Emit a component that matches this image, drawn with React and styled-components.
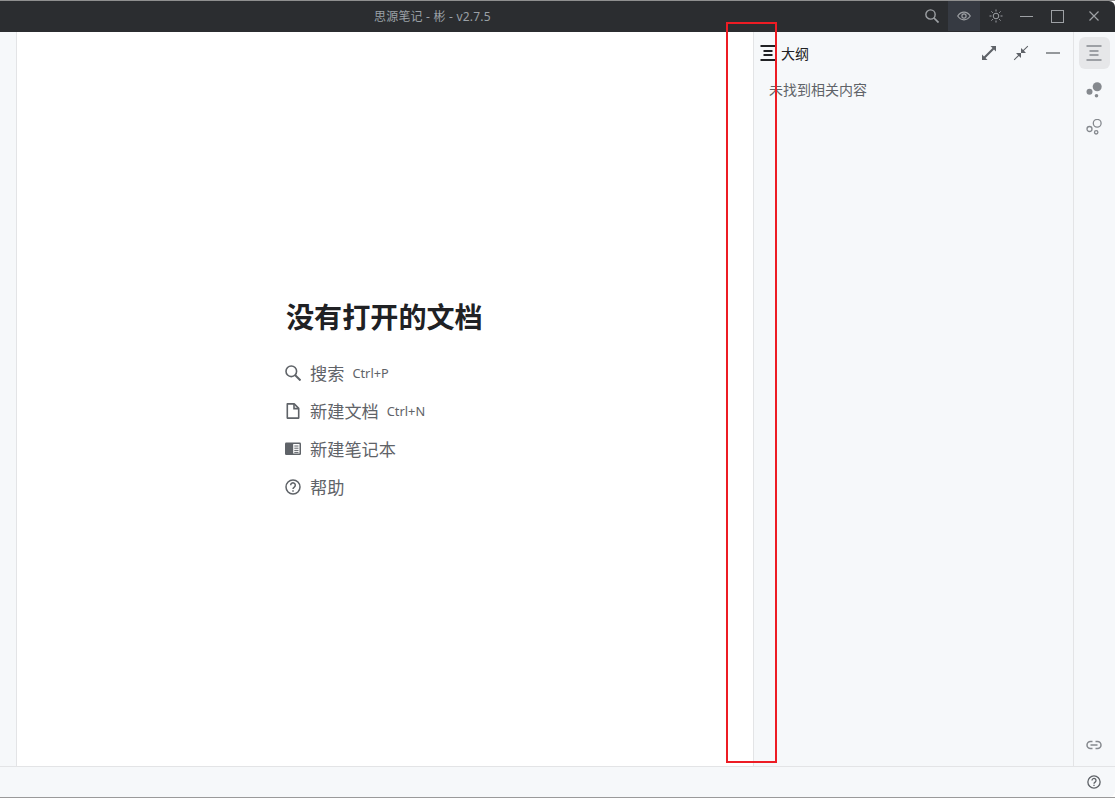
import React from "react";
import styled, { createGlobalStyle } from "styled-components";

const Global = createGlobalStyle`
  html, body { margin: 0; padding: 0; background: #9a9a9a; }
  body { font-family: "Liberation Sans", "Noto Sans CJK SC", sans-serif; }
  svg { display: block; }
`;
const Win = styled.div`
  position: relative; width: 1115px; height: 798px; overflow: hidden;
  display: flex; flex-direction: column; background: #fff;
  border-top: 1px solid #8f8f8f; border-bottom: 1px solid #9a9a9a; box-sizing: border-box;
`;
const TitleBar = styled.header`
  height: 31px; flex: none; background: #2b2d30; display: flex; align-items: flex-start; position: relative;
  border-top-right-radius: 6px;
`;
const Title = styled.div`
  position: absolute; left: 374px; top: 8px; font-size: 12px; line-height: 16px; color: #9aa0a6; letter-spacing: 0.2px;
  font-family: "Noto Sans", "Noto Sans CJK SC", sans-serif; white-space: nowrap;
`;
const WinButtons = styled.div`
  margin-left: auto; display: flex; height: 30px;
`;
const WinBtn = styled.div`
  width: ${p => p.$w}px; height: 100%; display: flex; align-items: center; justify-content: center;
  background: ${p => p.$active ? "#363a42" : "transparent"}; color: #9ea1a5;
`;
const Body = styled.div`
  flex: 1; display: flex; min-height: 0;
`;
const LeftDock = styled.aside`
  width: 17px; flex: none; background: #f6f8fa; border-right: 1px solid #e3e4e6; box-sizing: border-box;
`;
const Editor = styled.main`
  flex: 1; display: flex; flex-direction: column; padding: 266px 0 0 268px; background: #fff; min-width: 0;
`;
const Heading = styled.h1`
  margin: 0 0 20px 1px; font-size: 28.1px; line-height: 36px; font-weight: 700; color: #202124;
  font-family: "Noto Sans CJK SC", sans-serif;
`;
const Action = styled.div`
  display: flex; align-items: center; height: 38px; color: #5f6368;
`;
const ActionIcon = styled.span`
  width: 16px; height: 16px; margin-right: 9px; display: flex; color: #5f6368;
`;
const ActionText = styled.span`
  font-size: 17.2px; font-family: "Noto Sans CJK SC", sans-serif; color: #5f6368; line-height: 22px;
`;
const Hot = styled.span`
  margin-left: 8px; font-size: 12.8px; font-family: "Noto Sans", sans-serif; color: #5f6368;
`;
const Outline = styled.section`
  width: 320px; flex: none; background: #f6f8fa; border-left: 1px solid #e3e4e6; box-sizing: border-box;
  display: flex; flex-direction: column;
`;
const OutlineHead = styled.div`
  height: 42px; padding: 0 12px 0 6px; display: flex; align-items: center; flex: none; color: #202124;
`;
const OutlineTitle = styled.span`
  margin-left: 5px; font-size: 14px; color: #202124; font-family: "Noto Sans CJK SC", sans-serif; flex: 1;
`;
const HeadBtn = styled.div`
  width: 16px; height: 16px; margin-left: 16px; color: #5f6368; display: flex;
`;
const Empty = styled.div`
  padding: 5px 0 0 15px; font-size: 14px; line-height: 20px; color: #5f6368; font-family: "Noto Sans CJK SC", sans-serif;
`;
const RightDock = styled.nav`
  width: 42px; flex: none; background: #f6f8fa; border-left: 1px solid #e3e4e6; box-sizing: border-box;
  display: flex; flex-direction: column; align-items: center; padding: 5px 1px 5px 0;
`;
const DockBtn = styled.div`
  width: 31px; height: 32px; margin-bottom: ${p => p.$mb ?? 5}px; border-radius: 6px; background: ${p => p.$active ? "#e6e7e9" : "transparent"};
  display: flex; align-items: center; justify-content: center; color: #85898e;
`;
const Spacer = styled.div`flex: 1;`;
const Status = styled.footer`
  height: 31px; flex: none; background: #f6f8fa; border-top: 1px solid #e3e4e6; box-sizing: border-box;
  display: flex; align-items: center; justify-content: flex-end; padding-right: 14px; color: #5f6368;
  border-bottom-right-radius: 6px;
`;
const Annotation = styled.div`
  position: absolute; left: 726px; top: 21px; width: 51px; height: 741px; border: 2px solid #ed1c24; box-sizing: border-box; pointer-events: none;
`;

const Ic = ({ size = 16, children, sw = 1.5, fill = "none" }) => (
  <svg width={size} height={size} viewBox="0 0 16 16" fill={fill} stroke="currentColor" strokeWidth={sw}>{children}</svg>
);
const Search = ({ size = 16 }) => (
  <Ic size={size} sw={1.6}><circle cx="6.3" cy="6.3" r="5.3" /><path d="M10 10l5.500 5.500" strokeWidth="2" /></Ic>
);
const OutlineIcon = ({ sw = 1.4 }) => (
  <Ic sw={sw}><path d="M0.500 1h15M3.500 6h9M3.500 10h9M0.500 15h15" /></Ic>
);
const HelpPaths = () => (
  <>
    <circle cx="8" cy="8" r="7" />
    <path d="M5.700 6.200a2.300 2.300 0 1 1 3.600 1.900c-.9.600-1.300 1-1.300 2" />
    <path d="M8 11.200v1.500" />
  </>
);

export default function App() {
  return (
    <>
      <Global />
      <Win>
        <TitleBar>
          <Title>思源笔记 - 彬 - v2.7.5</Title>
          <WinButtons>
            <WinBtn $w={32}><Search size={14} /></WinBtn>
            <WinBtn $w={32} $active>
              <svg width="14" height="14" viewBox="0 0 16 16" fill="none" stroke="currentColor" strokeWidth="1.300"><path d="M.8 8c2-3 4.400-4.400 7.200-4.400S13.200 5 15.200 8c-2 3-4.400 4.400-7.200 4.400S2.800 11 .8 8z" /><circle cx="8" cy="8" r="2.400" /></svg>
            </WinBtn>
            <WinBtn $w={31}>
              <svg width="14" height="14" viewBox="0 0 14 14" fill="none" stroke="currentColor" strokeWidth="1"><circle cx="7" cy="7" r="2.800" /><path d="M7 .5v2M7 11.500v2M.5 7h2M11.500 7h2M2.400 2.400l1.400 1.400M10.200 10.200l1.400 1.400M2.400 11.600l1.400-1.400M10.200 3.800l1.400-1.400" /></svg>
            </WinBtn>
            <WinBtn $w={31}>
              <svg width="13" height="13" viewBox="0 0 13 13" fill="none" stroke="currentColor" strokeWidth="1"><path d="M0 6.500h13" /></svg>
            </WinBtn>
            <WinBtn $w={31}>
              <svg width="13" height="13" viewBox="0 0 13 13" fill="none" stroke="currentColor" strokeWidth="1"><rect x="0.500" y="0.500" width="12" height="12" /></svg>
            </WinBtn>
            <WinBtn $w={42}>
              <svg width="10" height="10" viewBox="0 0 10 10" fill="none" stroke="currentColor" strokeWidth="1.200"><path d="M.5 .5l9 9M9.500 .5l-9 9" /></svg>
            </WinBtn>
          </WinButtons>
        </TitleBar>
        <Body>
          <LeftDock />
          <Editor>
            <Heading>没有打开的文档</Heading>
            <Action>
              <ActionIcon><Search /></ActionIcon>
              <ActionText>搜索</ActionText><Hot>Ctrl+P</Hot>
            </Action>
            <Action>
              <ActionIcon>
                <Ic sw={1.600}><path d="M2.300 .9h6.900l4.500 4.500V15.100H2.300z" strokeLinejoin="round" /><path d="M9 1v4.600h4.600" /></Ic>
              </ActionIcon>
              <ActionText>新建文档</ActionText><Hot>Ctrl+N</Hot>
            </Action>
            <Action>
              <ActionIcon>
                <svg width="16" height="16" viewBox="0 0 16 16"><rect x="0" y="1.500" width="16" height="12.500" rx="1.200" fill="currentColor" /><rect x="8.200" y="3" width="6.300" height="9.500" fill="#fff" /><path d="M9.300 5h4.200M9.300 7.200h4.200M9.300 9.400h4.200M9.300 11.400h4.200" stroke="currentColor" strokeWidth="1" /></svg>
              </ActionIcon>
              <ActionText>新建笔记本</ActionText>
            </Action>
            <Action>
              <ActionIcon><Ic sw={1.500}><HelpPaths /></Ic></ActionIcon>
              <ActionText>帮助</ActionText>
            </Action>
          </Editor>
          <Outline>
            <OutlineHead>
              <OutlineIcon sw={1.800} />
              <OutlineTitle>大纲</OutlineTitle>
              <HeadBtn>
                <svg width="16" height="16" viewBox="0 0 16 16" fill="currentColor"><path d="M9.500 1H15v5.500L13 4.500 4.500 13 6.500 15H1V9.500L3 11.500 11.500 3z" /></svg>
              </HeadBtn>
              <HeadBtn>
                <svg width="16" height="16" viewBox="0 0 16 16" fill="currentColor"><path d="M14.500 .8l.7.700-4.300 4.300 2.100 2.100H8V3l2.100 2.100zM1.500 15.200l-.7-.7 4.300-4.300L3 8.100h5V13l-2.100-2.100z" /></svg>
              </HeadBtn>
              <HeadBtn>
                <svg width="16" height="16" viewBox="0 0 16 16" fill="none" stroke="currentColor" strokeWidth="1.300"><path d="M1 8h14" /></svg>
              </HeadBtn>
            </OutlineHead>
            <Empty>未找到相关内容</Empty>
          </Outline>
          <RightDock>
            <DockBtn $active><OutlineIcon /></DockBtn>
            <DockBtn>
              <svg width="16" height="16" viewBox="0 0 16 16" fill="currentColor"><circle cx="11.200" cy="4.700" r="4.500" /><circle cx="3.500" cy="9.700" r="3" /><circle cx="10.500" cy="13.700" r="1.800" /></svg>
            </DockBtn>
            <DockBtn>
              <svg width="16" height="16" viewBox="0 0 16 16" fill="none" stroke="currentColor" strokeWidth="1.300"><circle cx="11.200" cy="4.300" r="3.900" /><circle cx="3.500" cy="10" r="2.500" /><circle cx="10.200" cy="13.300" r="1.700" /></svg>
            </DockBtn>
            <Spacer />
            <DockBtn $mb={0}>
              <svg width="16" height="16" viewBox="0 0 16 16" fill="none" stroke="currentColor" strokeWidth="1.500"><path d="M6.500 4.500H4.500a3.500 3.500 0 0 0 0 7h2M9.500 4.500h2a3.500 3.500 0 0 1 0 7h-2M4.500 8h7" /></svg>
            </DockBtn>
          </RightDock>
        </Body>
        <Status>
          <svg width="14" height="14" viewBox="0 0 16 16" fill="none" stroke="currentColor" strokeWidth="1.500"><HelpPaths /></svg>
        </Status>
        <Annotation />
      </Win>
    </>
  );
}
